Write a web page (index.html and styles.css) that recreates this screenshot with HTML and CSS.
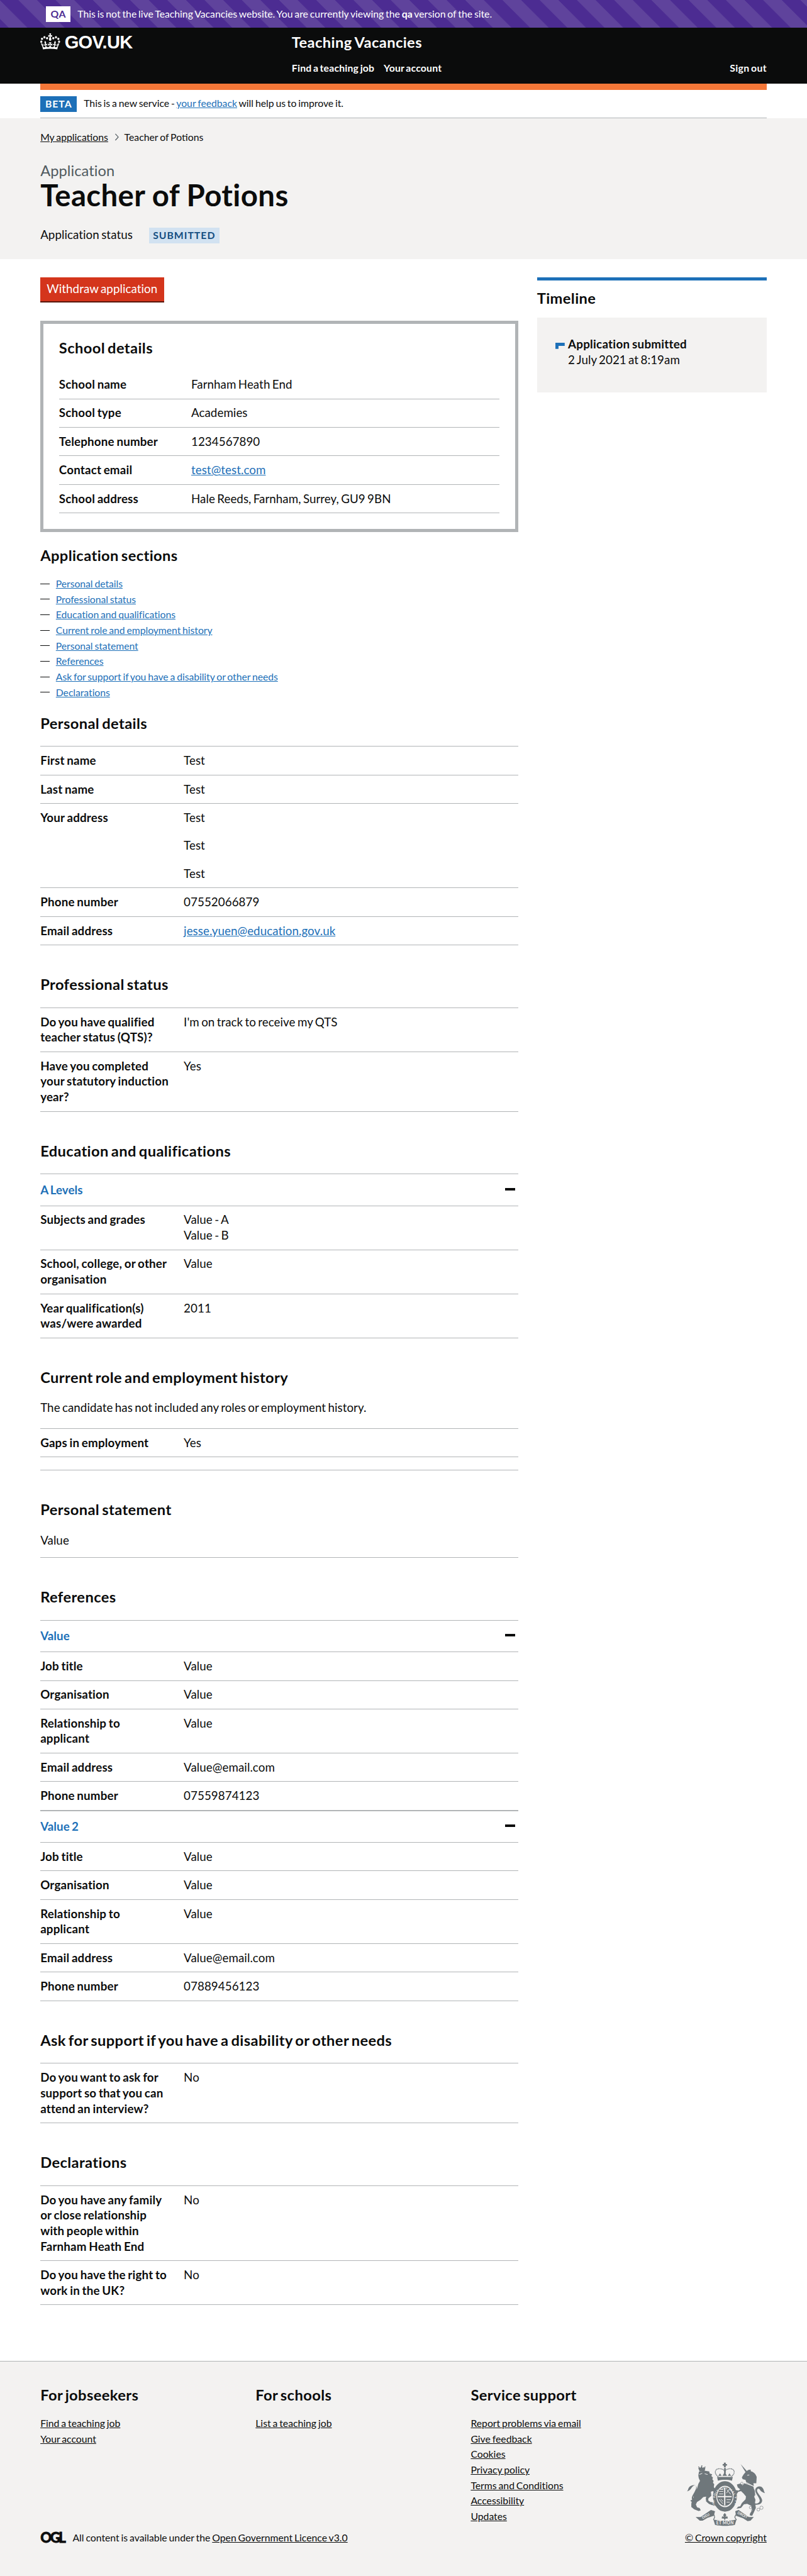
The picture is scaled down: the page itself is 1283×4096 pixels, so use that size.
FILE: index.html
```html
<!DOCTYPE html>
<html lang="en">
<head>
<meta charset="utf-8">
<title>Teacher of Potions - Teaching Vacancies</title>
<link rel="stylesheet" href="styles.css">
</head>
<body>
<div class="env-banner"><div class="container env-inner"><strong class="env-tag">QA</strong><span class="env-text">This is not the live Teaching Vacancies website. You are currently viewing the <strong>qa</strong> version of the site.</span></div></div>
<header class="header">
  <div class="container header-grid">
    <div class="logo">
      <svg class="crown" viewBox="0 0 132 97" preserveAspectRatio="none" aria-hidden="true"><path fill="currentColor" fill-rule="evenodd" d="M25 30.2c3.5 1.5 7.7-.2 9.1-3.7 1.5-3.6-.2-7.8-3.9-9.2-3.6-1.4-7.6.3-9.1 3.9-1.4 3.5.3 7.5 3.9 9zM9 39.5c3.6 1.5 7.8-.2 9.2-3.7 1.5-3.6-.2-7.8-3.9-9.1-3.6-1.5-7.6.2-9.1 3.8-1.4 3.5.3 7.5 3.8 9zM4.4 57.2c3.5 1.5 7.7-.2 9.1-3.8 1.5-3.6-.2-7.7-3.9-9.1-3.5-1.5-7.6.3-9.1 3.8-1.4 3.5.3 7.6 3.9 9.1zm38.3-21.4c3.5 1.5 7.7-.2 9.1-3.8 1.5-3.6-.2-7.7-3.9-9.1-3.6-1.5-7.6.3-9.1 3.8-1.3 3.6.4 7.7 3.9 9.1zm64.4-5.6c-3.6 1.5-7.8-.2-9.1-3.7-1.5-3.6.2-7.8 3.8-9.2 3.6-1.4 7.7.3 9.2 3.9 1.3 3.5-.4 7.5-3.9 9zm15.9 9.3c-3.6 1.5-7.7-.2-9.1-3.7-1.5-3.6.2-7.8 3.7-9.1 3.6-1.5 7.7.2 9.2 3.8 1.5 3.5-.3 7.5-3.8 9zm4.7 17.7c-3.6 1.5-7.8-.2-9.2-3.8-1.5-3.6.2-7.7 3.9-9.1 3.6-1.5 7.7.3 9.2 3.8 1.3 3.5-.4 7.6-3.9 9.1zM89.3 35.8c-3.6 1.5-7.8-.2-9.2-3.8-1.4-3.6.2-7.7 3.9-9.1 3.6-1.5 7.7.3 9.2 3.8 1.4 3.6-.3 7.7-3.9 9.1zM69.7 17.7l8.9 4.7V9.3l-8.9 2.8c-.2-.3-.5-.6-.9-.9L72.4 0H59.6l3.5 11.2c-.3.3-.6.5-.9.9l-8.8-2.8v13.1l8.8-4.7c.3.3.6.7.9.9l-5 15.4v.1c-.2.8-.4 1.6-.4 2.4 0 4.1 3.1 7.5 7 8.1h.2c.3 0 .7.1 1 .1.4 0 .7 0 1-.1h.2c4-.6 7.1-4.1 7.1-8.1 0-.8-.1-1.7-.4-2.4V34l-5.1-15.4c.4-.2.7-.6 1-.9zM66 92.8c16.9 0 32.8 1.1 47.1 3.2 4-16.9 8.9-26.7 14-33.5l-9.6-3.4c1 4.9 1.1 7.2 0 10.2-1.5-1.4-3-4.3-4.2-8.7L108.6 76c2.8-2 5-3.2 7.5-3.3-4.4 9.4-10 11.9-13.6 11.2-4.3-.8-6.3-4.6-5.6-7.9 1-4.7 5.7-5.9 8-.5 4.3-8.7-3-11.4-7.6-8.8 7.1-7.2 7.9-13.5 2.1-21.1-8 6.1-8.1 12.3-4.5 20.8-4.7-5.4-12.1-2.5-9.5 6.2 3.4-5.2 7.9-2 7.2 3.1-.6 4.3-6.4 7.8-13.5 7.2-10.3-.9-10.9-8-11.2-13.8 2.5-.5 7.1 1.8 11 7.3L80.2 60c-4.1 4.4-8 5.3-12.3 5.4 1.4-4.4 8-11.6 8-11.6H55.5s6.4 7.2 7.9 11.6c-4.2-.1-8-1-12.3-5.4l1.4 16.4c3.9-5.5 8.5-7.7 10.9-7.3-.3 5.8-.9 12.8-11.1 13.8-7.2.6-12.9-2.9-13.5-7.2-.7-5 3.8-8.3 7.1-3.1 2.7-8.7-4.6-11.6-9.4-6.2 3.7-8.5 3.6-14.7-4.6-20.8-5.8 7.6-5 13.9 2.2 21.1-4.7-2.6-11.9.1-7.7 8.8 2.3-5.5 7.1-4.2 8.1.5.7 3.3-1.3 7.1-5.7 7.9-3.5.7-9-1.8-13.5-11.2 2.5.1 4.7 1.3 7.5 3.3l-4.7-15.4c-1.2 4.4-2.7 7.2-4.3 8.7-1.1-3-.9-5.3 0-10.2l-9.5 3.4c5 6.9 9.9 16.7 14 33.5 14.8-2.1 30.8-3.2 47.7-3.2z"/></svg>
      <span class="logotype">GOV.UK</span>
    </div>
    <div>
      <a class="service-name">Teaching Vacancies</a>
      <nav class="main-nav"><a>Find a teaching job</a><a>Your account</a><a class="sign-out">Sign out</a></nav>
    </div>
  </div>
</header>
<div class="container">
  <div class="brand-bar"></div>
  <div class="phase"><strong class="phase-tag">BETA</strong><span class="phase-text">This is a new service - <a class="link">your feedback</a> will help us to improve it.</span></div>
</div>
<div class="hero">
  <div class="container">
    <nav class="breadcrumbs"><a>My applications</a><svg class="chevron" viewBox="0 0 8 14"><path d="M1 1l5.5 6L1 13" fill="none" stroke="#505a5f" stroke-width="1.4"/></svg><span>Teacher of Potions</span></nav>
    <div class="caption">Application</div>
    <h1 class="title">Teacher of Potions</h1>
    <div class="status"><span>Application status</span><strong class="status-tag">SUBMITTED</strong></div>
  </div>
</div>
<div class="container columns">
  <main class="main">
    <a class="button">Withdraw application</a>
    <section class="panel">
      <h2 class="heading">School details</h2>
      <dl class="summary">
        <div class="row"><dt>School name</dt><dd>Farnham Heath End</dd></div>
        <div class="row"><dt>School type</dt><dd>Academies</dd></div>
        <div class="row"><dt>Telephone number</dt><dd>1234567890</dd></div>
        <div class="row"><dt>Contact email</dt><dd><a class="link">test@test.com</a></dd></div>
        <div class="row"><dt>School address</dt><dd>Hale Reeds, Farnham, Surrey, GU9 9BN</dd></div>
      </dl>
    </section>
    <h2 class="heading">Application sections</h2>
    <ul class="contents">
      <li><a class="link">Personal details</a></li>
      <li><a class="link">Professional status</a></li>
      <li><a class="link">Education and qualifications</a></li>
      <li><a class="link">Current role and employment history</a></li>
      <li><a class="link">Personal statement</a></li>
      <li><a class="link">References</a></li>
      <li><a class="link">Ask for support if you have a disability or other needs</a></li>
      <li><a class="link">Declarations</a></li>
    </ul>
    <section class="section">
      <h2 class="heading">Personal details</h2>
      <dl class="summary ruled">
        <div class="row"><dt>First name</dt><dd>Test</dd></div>
        <div class="row"><dt>Last name</dt><dd>Test</dd></div>
        <div class="row"><dt>Your address</dt><dd class="stacked"><p>Test</p><p>Test</p><p>Test</p></dd></div>
        <div class="row"><dt>Phone number</dt><dd>07552066879</dd></div>
        <div class="row"><dt>Email address</dt><dd><a class="link">jesse.yuen@education.gov.uk</a></dd></div>
      </dl>
    </section>
    <section class="section">
      <h2 class="heading">Professional status</h2>
      <dl class="summary ruled">
        <div class="row"><dt>Do you have qualified<br>teacher status (QTS)?</dt><dd>I'm on track to receive my QTS</dd></div>
        <div class="row"><dt>Have you completed<br>your statutory induction<br>year?</dt><dd>Yes</dd></div>
      </dl>
    </section>
    <section class="section">
      <h2 class="heading">Education and qualifications</h2>
      <h3 class="accordion"><span>A Levels</span><i class="minus"></i></h3>
      <dl class="summary ruled">
        <div class="row"><dt>Subjects and grades</dt><dd>Value - A<br>Value - B</dd></div>
        <div class="row"><dt>School, college, or other<br>organisation</dt><dd>Value</dd></div>
        <div class="row"><dt>Year qualification(s)<br>was/were awarded</dt><dd>2011</dd></div>
      </dl>
    </section>
    <section class="section">
      <h2 class="heading">Current role and employment history</h2>
      <p class="body">The candidate has not included any roles or employment history.</p>
      <dl class="summary ruled gaps">
        <div class="row"><dt>Gaps in employment</dt><dd>Yes</dd></div>
      </dl>
    </section>
    <section class="section">
      <h2 class="heading">Personal statement</h2>
      <p class="body statement">Value</p>
    </section>
    <section class="section">
      <h2 class="heading">References</h2>
      <h3 class="accordion"><span>Value</span><i class="minus"></i></h3>
      <dl class="summary ruled">
        <div class="row"><dt>Job title</dt><dd>Value</dd></div>
        <div class="row"><dt>Organisation</dt><dd>Value</dd></div>
        <div class="row"><dt>Relationship to<br>applicant</dt><dd>Value</dd></div>
        <div class="row"><dt>Email address</dt><dd>Value@email.com</dd></div>
        <div class="row"><dt>Phone number</dt><dd>07559874123</dd></div>
      </dl>
      <h3 class="accordion"><span>Value 2</span><i class="minus"></i></h3>
      <dl class="summary ruled">
        <div class="row"><dt>Job title</dt><dd>Value</dd></div>
        <div class="row"><dt>Organisation</dt><dd>Value</dd></div>
        <div class="row"><dt>Relationship to<br>applicant</dt><dd>Value</dd></div>
        <div class="row"><dt>Email address</dt><dd>Value@email.com</dd></div>
        <div class="row"><dt>Phone number</dt><dd>07889456123</dd></div>
      </dl>
    </section>
    <section class="section">
      <h2 class="heading">Ask for support if you have a disability or other needs</h2>
      <dl class="summary ruled">
        <div class="row"><dt>Do you want to ask for<br>support so that you can<br>attend an interview?</dt><dd>No</dd></div>
      </dl>
    </section>
    <section class="section">
      <h2 class="heading">Declarations</h2>
      <dl class="summary ruled">
        <div class="row"><dt>Do you have any family<br>or close relationship<br>with people within<br>Farnham Heath End</dt><dd>No</dd></div>
        <div class="row"><dt>Do you have the right to<br>work in the UK?</dt><dd>No</dd></div>
      </dl>
    </section>
  </main>
  <aside class="aside">
    <h2 class="heading aside-heading">Timeline</h2>
    <div class="timeline">
      <svg class="marker" viewBox="0 0 15 10"><path d="M0 0h15v5H5v5H0z" fill="#1d70b8"/></svg>
      <div><strong>Application submitted</strong><p>2 July 2021 at 8:19am</p></div>
    </div>
  </aside>
</div>
<footer class="footer">
  <div class="container footer-grid">
    <div>
      <div class="footer-nav">
        <div><h2 class="heading">For jobseekers</h2><ul><li><a>Find a teaching job</a></li><li><a>Your account</a></li></ul></div>
        <div><h2 class="heading">For schools</h2><ul><li><a>List a teaching job</a></li></ul></div>
        <div><h2 class="heading">Service support</h2><ul><li><a>Report problems via email</a></li><li><a>Give feedback</a></li><li><a>Cookies</a></li><li><a>Privacy policy</a></li><li><a>Terms and Conditions</a></li><li><a>Accessibility</a></li><li><a>Updates</a></li></ul></div>
      </div>
      <div class="licence"><span class="ogl">OGL</span><span>All content is available under the <a>Open Government Licence v3.0</a></span></div>
    </div>
    <div class="copyright">
      <svg class="crest" viewBox="80 52 378 310" aria-hidden="true">
        <defs><path id="garter" d="M222 280A50 62 0 1 1 304 280"/></defs>
        <g fill="#6f777b">
          <!-- lion -->
          <path d="M135 82l4-7 5 5 6-9 7 9 6-5 6 7-4 14h-24z"/><circle cx="152" cy="70" r="3"/><circle cx="137" cy="75" r="2.5"/><circle cx="168" cy="76" r="2.5"/>
          <path d="M138 98l26-5 24 4 2 10 12 4-4 8 8 8-3 8 6 8-3 9 6 7-2 14 10 12-2 14-6 1-6-8-10 3 2 20-14 12-1 10 10 8 22 4 4-6 6 8-4 12-12 0-22-8-14-12-2-14 2-10-14 2-14 14-16 10-6 12 6 14 12 4 6 10-10 4-22-8-14-12 0-16 4-18 8-14-2-10 8-16 10-16 6-22 8-14-6-14-2-12z"/>
          <path d="M118 240c-14-2-18-12-12-24 8-16 22-34 18-48-4-8-14-2-20 6-8 12-12 16-24 20 6-4 4-12 10-20 8-10 30-16 36-4 6 16-8 36-14 48-4 8 0 14 8 16z"/>
          <path d="M96 238l14-6 2 8-10 4z"/>
          <!-- unicorn -->
          <path d="M340 61l32 36-8 4z"/>
          <path d="M362 102l14-12 12-2 2 8c14 4 24 14 28 28l-2 30-14 0 2 14-36-14-4-16-14-4-4-8 8-14z"/>
          <path d="M358 154l44 16 2 10c6 10 8 24 2 40l6 14-2 14 4 26-10 22-8 16-12-2 2-10 10-14-4-22-20-10-16 2-14 18-22 4 8-10 10-2 8-16 18-18 2-14-12-14-12-12-14 4-6 10-8-12 4-6 12 2 8-6-12-10-4-14 16-4 12 8z"/>
          <path d="M402 250c18 8 34-2 30-16-4-18-26-34-20-52 6-14 26-16 34-6 8 8 6 18 12 26-12-4-20-8-24-16-4-6-12-8-14 0-4 14 20 30 24 48 4 20-20 30-42 22z"/>
          <!-- garter and crown -->
          <path fill-rule="evenodd" d="M264 144a58 74 0 1 0 .1 0zM264 166a42 52 0 1 0 .1 0z"/>
          <path fill-rule="evenodd" d="M264 172a38 46 0 1 0 .1 0zM260 176v40h-31v6h31v40h6v-40h31v-6h-31v-40z"/>
          <path d="M226 124h76l-4 18c-22-6-46-6-68 0zM232 118l8-12 8 12zM252 118l11-18 11 18zM278 118l8-12 8 12z"/>
          <path d="M259 54h9v7h6v8h-6v8h-9v-8h-6v-8h6zM260 80h8v26h-8z"/>
          <path d="M263 298l8 11-5 7 10-1 2 10-11 1-4 8-4-8-11-1 2-10 10 1-5-7z"/>
          <!-- motto scroll -->
          <path d="M122 318l24 0 50-34 20 6-6 22-30 10-24 14-14 0z"/>
          <path d="M404 318l-24 0-50-34-16 6 4 22 34 12 22 14 14-2z"/>
          <path d="M208 330c36 8 76 8 112 0l-8 26c-30 6-66 6-96 0z"/>
        </g>
        <g fill="none" stroke="#6f777b" stroke-width="4">
          <path d="M232 122c-20-12-20-36 2-38 14-1 28 4 29 16 1-12 15-17 29-16 22 2 22 26 2 38" stroke-dasharray="5 2"/>
          <path d="M210 290c-14 6 6 16 4 30l-6 12M318 290c14 6-6 16-6 30l8 12"/>
          <circle cx="346" cy="155" r="6" stroke-width="2"/><circle cx="406" cy="209" r="5" stroke-width="2"/><circle cx="388" cy="272" r="6" stroke-width="2"/><circle cx="398" cy="287" r="6" stroke-width="2"/><circle cx="426" cy="282" r="7" stroke-width="2"/><circle cx="441" cy="273" r="8" stroke-width="2"/>
        </g>
        <g fill="none" stroke="#f3f2f1" stroke-width="3">
          <path d="M236 194h20M236 206h20M240 184h16M272 234h20M272 246h16M236 232l18 22M244 230l10 12M274 186l18 22M284 184l-12 18M140 112l14-6M166 108l14 4M360 146l44 24M372 116l10-2"/>
        </g>
        <g fill="#f3f2f1" class="motto">
          <text font-size="15"><textPath href="#garter" textLength="262">HONI SOIT QUI MAL Y PENSE</textPath></text>
          <text font-size="17" x="-25" y="6" transform="translate(175 311) rotate(-29)">DIEU</text>
          <text font-size="17" x="-29" y="6" transform="translate(352 309) rotate(29)">DROIT</text>
          <text font-size="20" x="222" y="353" textLength="84">ET MON</text>
        </g>
      </svg>
      <a>© Crown copyright</a>
    </div>
  </div>
</footer>
</body>
</html>
```
FILE: styles.css
```css
* { box-sizing: border-box; }
html { background: #f3f2f1; }
body {
  margin: 0;
  width: 1300px;
  zoom: 0.98692;
  background: #fff;
  color: #0b0c0c;
  font: 400 19px/25px Lato, "Liberation Sans", sans-serif;
  letter-spacing: 0.003em;
  word-spacing: -0.08em;
}
h1, h2, h3, p, ul, dl, dd { margin: 0; padding: 0; }
ul { list-style: none; }
a { color: inherit; }
strong, dt { font-weight: 700; }
dt { letter-spacing: 0.01em; word-spacing: -0.06em; white-space: nowrap; }
.container { width: 1170px; margin: 0 auto; }
.link { color: #1d70b8; text-decoration: underline; }

/* environment banner */
.env-banner {
  height: 45px;
  color: #fff;
  background: #4c2c92 linear-gradient(45deg, #4c2c92 25%, #5f439c 25%, #5f439c 50%, #4c2c92 50%, #4c2c92 75%, #5f439c 75%) 0 0 / 60px 60px;
}
.env-inner { display: flex; align-items: center; gap: 11px; height: 100%; padding-left: 9px; font-size: 16px; line-height: 20px; }
.env-tag { width: 40px; height: 25px; background: #fff; color: #4c2c92; text-align: center; line-height: 25px; letter-spacing: 0.5px; }
.env-text { letter-spacing: -0.001em; word-spacing: -0.07em; }

/* header */
.header { height: 90px; background: #0b0c0c; color: #fff; }
.header a { text-decoration: none; }
.header-grid { display: grid; grid-template-columns: 405px 1fr; padding-top: 9px; }
.logo { display: flex; gap: 7px; height: 26px; }
.crown { width: 32px; height: 26px; }
.logotype { font: 700 29.5px/26px "Liberation Sans", Arial, sans-serif; letter-spacing: -0.7px; word-spacing: 0; padding-top: 2px; }
.service-name { display: block; font-size: 24px; line-height: 30px; font-weight: 700; letter-spacing: 0.017em; }
.main-nav { display: flex; gap: 15px; margin-top: 15px; font-size: 16px; line-height: 20px; font-weight: 700; letter-spacing: 0.012em; }
.sign-out { margin-left: auto; letter-spacing: 0.02em; }
.brand-bar { height: 10px; background: #f47738; }
.phase { display: flex; gap: 11px; padding: 10px 0; border-bottom: 1px solid #b1b4b6; font-size: 16px; }
.phase-tag { width: 59px; height: 25px; background: #1d70b8; color: #fff; text-align: center; line-height: 24px; letter-spacing: 1px; }
.phase-text { line-height: 23px; letter-spacing: -0.002em; word-spacing: -0.07em; }

/* page heading */
.hero { height: 226px; padding-top: 19.5px; background: #f3f2f1; }
.breadcrumbs { display: flex; align-items: center; font-size: 16px; line-height: 20px; letter-spacing: 0; word-spacing: -0.07em; }
.breadcrumbs a { text-decoration: underline; }
.chevron { width: 8px; height: 12px; margin: 1px 8px 0 10px; }
.caption { margin-top: 30px; font-size: 24px; line-height: 28.5px; color: #505a5f; }
.title { font-size: 48px; line-height: 50px; font-weight: 700; letter-spacing: 0.008em; word-spacing: -0.01em; }
.status { display: flex; gap: 26px; margin-top: 28px; line-height: 23px; }
.status-tag { width: 114px; height: 25px; background: #d2e2f1; color: #144e81; font-size: 16px; line-height: 24px; letter-spacing: 1px; text-align: center; }

/* columns */
.columns { display: grid; grid-template-columns: 770px 370px; gap: 30px; align-items: start; padding: 30px 0 90px; }
.heading { font-size: 24px; line-height: 28px; padding-bottom: 2px; font-weight: 700; letter-spacing: 0.017em; word-spacing: -0.09em; }
.button { display: block; width: 199px; height: 38px; padding-top: 6px; background: #d4351c; box-shadow: 0 2px 0 #55150b; color: #fff; text-align: center; }
.panel { margin: 32px 0 25px; padding: 25px; border: 5.07px solid #b1b4b6; }
.panel .summary { margin-top: 20px; }
.row { display: grid; grid-template-columns: 30% 1fr; padding: 10px 0; border-bottom: 1px solid #b1b4b6; }
.ruled { margin-top: 20px; border-top: 1px solid #b1b4b6; }
.stacked { display: grid; gap: 20px; }
.contents { margin: 16px 0 24px; font-size: 16px; letter-spacing: -0.004em; word-spacing: -0.07em; }
.contents li { display: flex; align-items: center; gap: 10px; }
.contents li::before { content: ""; width: 15px; height: 1px; background: #0b0c0c; }
.section { margin-bottom: 50px; }
.section:last-child { margin-bottom: 0; }
.accordion { display: flex; justify-content: space-between; align-items: center; height: 51px; margin-top: 20px; padding-right: 5px; border-top: 1px solid #b1b4b6; color: #1d70b8; font-size: 19px; font-weight: 700; }
.summary + .accordion { margin-top: 0; }
.accordion + .ruled { margin-top: 0; }
.minus { width: 16px; height: 4px; margin-bottom: 2px; background: #0b0c0c; }
.body { margin-top: 20px; }
.gaps { padding-bottom: 20px; border-bottom: 1px solid #b1b4b6; }
.statement { padding-bottom: 15px; border-bottom: 1px solid #b1b4b6; }

/* timeline */
.aside { border-top: 5.07px solid #1d70b8; padding-top: 15px; }
.aside-heading { margin-bottom: 15px; }
.timeline { display: flex; gap: 5px; height: 120px; padding: 30px; background: #f3f2f1; }
.marker { width: 15px; height: 10px; margin-top: 10px; }
.timeline strong { letter-spacing: 0.015em; word-spacing: -0.06em; }

/* footer */
.footer { border-top: 1px solid #b1b4b6; padding: 40px 0 49px; background: #f3f2f1; font-size: 16px; letter-spacing: -0.001em; word-spacing: -0.07em; }
.footer a { text-decoration: underline; }
.footer-grid { display: grid; grid-template-columns: 1fr auto; }
.footer-nav { display: grid; grid-template-columns: 346.67px 346.67px 1fr; height: 222px; }
.footer-nav ul { margin-top: 17px; }
.licence { display: flex; gap: 10px; margin-top: 9px; }
.ogl { width: 42px; font-size: 22.5px; font-weight: 900; letter-spacing: -2.5px; white-space: nowrap; -webkit-text-stroke: 0.8px currentColor; }
.copyright { display: flex; flex-direction: column; align-items: center; justify-content: flex-end; }
.crest { width: 126px; height: 103px; margin-bottom: 6px; }
.motto { font-family: Lato, sans-serif; font-weight: 700; letter-spacing: 0; word-spacing: 0; }
```
